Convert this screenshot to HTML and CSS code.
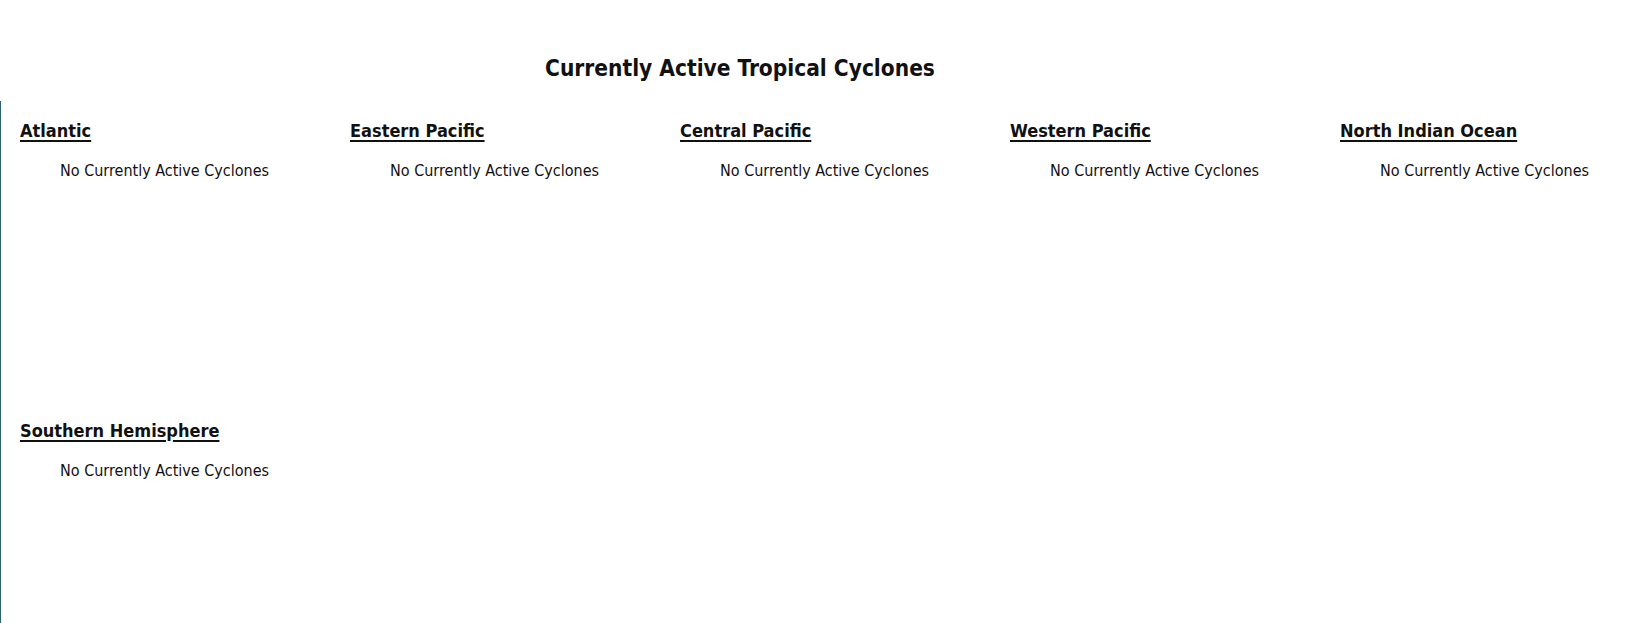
FILE: index.html
```html
<!DOCTYPE html>
<html lang="en">
<head>
    <meta charset="UTF-8">
    <meta name="viewport" content="width=device-width, initial-scale=1.0">
    <title>Currently Active Tropical Cyclones</title>
    <link rel="stylesheet" href="styles.css">
</head>
<body>
    <h1 class="page-title">Currently Active Tropical Cyclones</h1>
    <div class="basin-container">
        <div class="basin">
            <h2>Atlantic</h2>
            <p class="no-storms">No Currently Active Cyclones</p>
        </div>
        <div class="basin">
            <h2>Eastern Pacific</h2>
            <p class="no-storms">No Currently Active Cyclones</p>
        </div>
        <div class="basin">
            <h2>Central Pacific</h2>
            <p class="no-storms">No Currently Active Cyclones</p>
        </div>
        <div class="basin">
            <h2>Western Pacific</h2>
            <p class="no-storms">No Currently Active Cyclones</p>
        </div>
        <div class="basin">
            <h2>North Indian Ocean</h2>
            <p class="no-storms">No Currently Active Cyclones</p>
        </div>
        <div class="basin">
            <h2>Southern Hemisphere</h2>
            <p class="no-storms">No Currently Active Cyclones</p>
        </div>
    </div>
</body>
</html>
```

FILE: styles.css
```css
body {
    margin: 0;
    background-color: white;
    color: #111;
    font-family: "DejaVu Sans Condensed", "DejaVu Sans", Tahoma, sans-serif;
    overflow-x: hidden;
}
.page-title {
    width: 1480px;
    margin: 0;
    padding: 55px 0 20px;
    text-align: center;
    font-size: 22.5px;
    font-weight: bold;
}
.basin-container {
    display: grid;
    grid-template-columns: repeat(4, 330px) 1fr;
    grid-auto-rows: 300px;
    border-left: 1px solid #2b6070;
    min-height: 600px;
}
.basin {
    padding: 19px 0 0 19px;
}
.basin h2 {
    margin: 0;
    font-size: 18px;
    font-weight: bold;
    text-decoration: underline;
    text-decoration-thickness: 2px;
    text-underline-offset: 3px;
}
.no-storms {
    margin: 20px 0 0;
    padding-left: 40px;
    font-size: 16px;
}
```
